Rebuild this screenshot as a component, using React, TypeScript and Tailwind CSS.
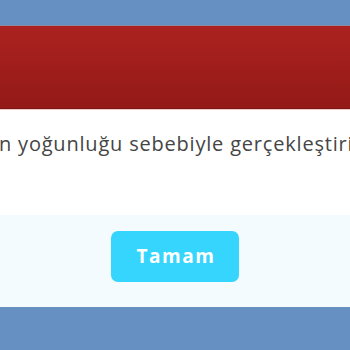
const App = () => {
  return (
    <div className="w-[350px] h-[350px] overflow-hidden bg-[#6690c1] flex flex-col font-['Open_Sans',sans-serif]">
      <div className="h-[25px] shrink-0" />
      <div className="h-[1px] shrink-0 bg-[#8e8aa6]" />
      {/* modal */}
      <div className="shrink-0 flex flex-col">
        <div className="h-[82px] bg-gradient-to-b from-[#ab2220] to-[#941a17]" />
        <div className="h-[1px] bg-[#7c1615]" />
        <div className="h-[1px] bg-[#f2c9c6]" />
        <div className="h-[105px] bg-white overflow-hidden pt-[20px]">
          <p className="whitespace-nowrap text-[20px] leading-[27px] tracking-[0.8px] text-[#454545] ml-[-1px]">
            n yoğunluğu sebebiyle gerçekleştirilemedi
          </p>
        </div>
        <div className="h-[92px] bg-[#f3fbfe] flex justify-center pt-[16px]">
          <button className="w-[128px] h-[51px] rounded-[7px] bg-[#36d5fd] text-white font-bold text-[19px] tracking-[1.5px] pl-[2px]">
            Tamam
          </button>
        </div>
      </div>
      <div className="flex-1" />
    </div>
  );
};

export default App;
